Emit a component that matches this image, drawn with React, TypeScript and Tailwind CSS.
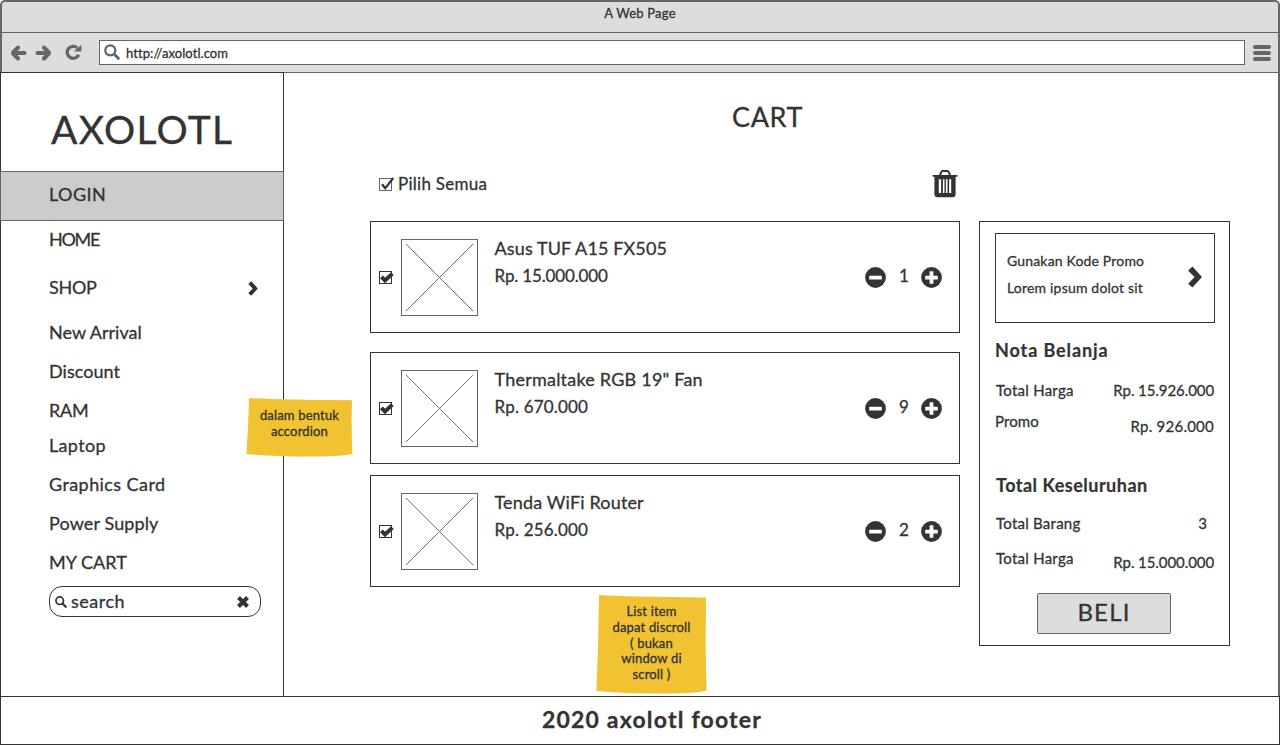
import type { ReactNode } from "react";

const menu = [
  { label: "HOME", style: "h-[38px] tracking-[-1.29px]" },
  { label: "SHOP", style: "h-[58px] tracking-[-0.31px]", expandable: true },
  { label: "New Arrival", style: "h-[32px] tracking-[0.03px]" },
  { label: "Discount", style: "h-[46px] tracking-[0.04px]" },
  { label: "RAM", style: "h-[32px] tracking-[-0.23px]" },
  { label: "Laptop", style: "h-[38px] tracking-[0.34px]" },
  { label: "Graphics Card", style: "h-[40px] tracking-[0.42px]" },
  { label: "Power Supply", style: "h-[38px] tracking-[0.12px]" },
  { label: "MY CART", style: "h-[40px] tracking-[0.05px]" },
];

const items = [
  { name: "Asus TUF A15 FX505", price: "Rp. 15.000.000", qty: 1, nameStyle: "tracking-[0.12px]", priceStyle: "tracking-[-0.15px]", gap: "" },
  { name: 'Thermaltake RGB 19" Fan', price: "Rp. 670.000", qty: 9, nameStyle: "tracking-[0.22px]", priceStyle: "tracking-[0.18px]", gap: "mt-[19px]" },
  { name: "Tenda WiFi Router", price: "Rp. 256.000", qty: 2, nameStyle: "tracking-[0.16px]", priceStyle: "tracking-[0.18px]", gap: "mt-[11px]" },
];

function Chevron({ className }: { className: string }) {
  return (
    <svg viewBox="0 0 14 22" className={className} fill="#333">
      <path d="M.6 4.2 3.9.9Q4.4.4 4.9.9L13.5 10.4Q14 11 13.5 11.6L4.9 21.1Q4.4 21.6 3.9 21.1L.6 18.2Q.1 17.7.6 17.2L6.6 11 .6 5.2Q.1 4.7.6 4.2Z" />
    </svg>
  );
}

function Magnifier({ className }: { className: string }) {
  return (
    <svg viewBox="0 0 16 16" className={className} fill="none" stroke="currentColor" strokeLinecap="round">
      <circle cx="6.3" cy="6.3" r="5" strokeWidth="2.3" />
      <path d="m10.3 10.3 4 4" strokeWidth="3" />
    </svg>
  );
}

function BoldCheck() {
  return (
    <svg viewBox="0 0 16 15" className="h-[15px] w-4 shrink-0">
      <rect x=".5" y="1.5" width="12" height="12" fill="#fff" stroke="#333" />
      <path d="M2.4 6.8 6 10.4 13.4 3.6" fill="none" stroke="#333" strokeWidth="4" />
    </svg>
  );
}

function Placeholder() {
  return (
    <svg viewBox="0 0 77 77" className="size-[77px] shrink-0" fill="none" stroke="#666">
      <rect x=".5" y=".5" width="76" height="76" />
      <path d="m5 5 67 67M72 5 5 72" strokeWidth=".9" />
    </svg>
  );
}

function RoundButton({ plus = false }: { plus?: boolean }) {
  return (
    <button className="size-[21px]">
      <svg viewBox="0 0 21 21" className="size-[21px]">
        <circle cx="10.5" cy="10.5" r="10.4" fill="#333" />
        <rect x="4.2" y="8.7" width="12.6" height="3.8" rx=".6" fill="#fff" />
        {plus && <rect x="8.6" y="4.2" width="3.8" height="12.6" rx=".6" fill="#fff" />}
      </svg>
    </button>
  );
}

function Note({ className, path, viewBox, children }: { className: string; path: string; viewBox: string; children: ReactNode }) {
  return (
    <div className={className}>
      <svg viewBox={viewBox} className="absolute inset-0 size-full">
        <path d={path} fill="#f1c232" />
      </svg>
      <div className="relative text-center text-[13px] leading-[15.75px] tracking-[0.17px]">{children}</div>
    </div>
  );
}

export default function App() {
  return (
    <div className="relative flex h-[745px] w-[1280px] flex-col overflow-hidden bg-white font-['Lato',sans-serif] text-[#333] [-webkit-text-stroke:0.3px_#333]">
      <header className="h-[73px] shrink-0 rounded-t-[5px] border-x-2 border-t-2 border-b border-[#666] bg-[#ddd]">
        <div className="flex h-[31px] items-start justify-center border-b border-[#666] pt-[3px] text-[13px] leading-4 tracking-[0.22px]">
          A Web Page
        </div>
        <div className="flex h-[39px] items-center text-[#666]">
          <svg viewBox="0 0 17 16" className="ml-2 h-4 w-[17px]" fill="none" stroke="currentColor" strokeWidth="4" strokeLinecap="round">
            <path d="M3.5 8H14.5" />
            <path d="M8 2.5 2.6 8 8 13.5" strokeLinejoin="bevel" />
          </svg>
          <svg viewBox="0 0 17 16" className="ml-2 h-4 w-[17px]" fill="none" stroke="currentColor" strokeWidth="4" strokeLinecap="round">
            <path d="M2.5 8H13.5" />
            <path d="M9 2.5 14.4 8 9 13.5" strokeLinejoin="bevel" />
          </svg>
          <svg viewBox="0 0 17 16" className="mb-px ml-[13px] h-4 w-[17px]">
            <path d="M12.2 3.8A6 6 0 1 0 13.7 10.8" fill="none" stroke="currentColor" strokeWidth="3.3" />
            <path d="M16.4.8V6.8Q16.4 7.4 15.8 7.4H8.8Z" fill="currentColor" />
          </svg>
          <div className="ml-[17px] flex h-[25px] w-[1146px] items-center border border-[#666] bg-white">
            <Magnifier className="mb-px ml-1 size-4" />
            <span className="ml-[6px] text-[13px] leading-4 tracking-[0.08px] text-[#333]">http://axolotl.com</span>
          </div>
          <div className="ml-2 flex w-[18px] flex-col gap-[2px]">
            <span className="h-1 rounded-full bg-[#666]" />
            <span className="h-1 rounded-full bg-[#666]" />
            <span className="h-1 rounded-full bg-[#666]" />
          </div>
        </div>
      </header>

      <div className="flex h-[623px] shrink-0">
        <aside className="relative -mt-px flex h-[624px] w-[284px] shrink-0 flex-col border-x border-t border-[#333] bg-white text-[18px]">
          <h1 className="mt-[32px] ml-[50px] h-12 text-[39px] leading-[48px] tracking-[1.25px]">AXOLOTL</h1>
          <div className="-mx-px mt-[18px] flex h-[50px] shrink-0 items-center border border-[#666] bg-[#ccc] pb-[3px] pl-12 tracking-[0.45px]">
            LOGIN
          </div>
          <nav>
            {menu.map((m) => (
              <div key={m.label} className={`flex items-center justify-between pr-[25px] pb-[2px] pl-12 ${m.style}`}>
                {m.label}
                {m.expandable && <Chevron className="mt-[2px] h-[15px] w-[10px]" />}
              </div>
            ))}
          </nav>
          <div className="mt-[3px] ml-12 flex h-[31px] w-[212px] items-center rounded-[13px] border border-[#333] pr-[11px] pl-[5px] text-[18px] leading-5 tracking-[0.5px]">
            <Magnifier className="size-3" />
            <span className="mb-[2px] ml-1">search</span>
            <svg viewBox="0 0 12 12" className="ml-auto size-3" stroke="#333" strokeWidth="4">
              <path d="m1.5 1.5 9 9M10.5 1.5l-9 9" />
            </svg>
          </div>
        </aside>

        <main className="flex-1 border-r-2 border-[#666]">
          <h2 className="mt-[28px] ml-[448px] h-8 text-[27px] leading-8 tracking-[0.6px]">CART</h2>
          <div className="mt-[15px] flex pl-[86px]">
            <section className="w-[590px]">
              <div className="flex h-[73px] items-start">
                <label className="mt-[26px] ml-[9px] flex h-5 items-center text-[17px] leading-5 tracking-[0.28px]">
                  <svg viewBox="0 0 16 15" className="h-[15px] w-4" fill="none">
                    <rect x=".5" y="1.5" width="12" height="12" stroke="#666" />
                    <path d="M3 7.2 6.2 11.3 14.2 1" stroke="#333" strokeWidth="2.2" />
                  </svg>
                  <span className="ml-[3px]">Pilih Semua</span>
                </label>
                <svg viewBox="0 0 26 28" className="mt-[22px] mr-[2px] ml-auto h-7 w-[26px]">
                  <path d="M8 5.5 9.2 2Q9.5 1 10.6 1H15.4Q16.5 1 16.8 2L18 5.5" fill="none" stroke="#333" strokeWidth="2" />
                  <path d="M1 5H25Q25.6 5 25.6 5.8T25 6.8H23.6V24.3Q23.6 27.3 20.6 27.3H5.4Q2.4 27.3 2.4 24.3V6.8H1Q.4 6.6.4 5.8T1 5Z" fill="#333" />
                  <path d="M6.8 9.3H9.1V23H6.8ZM10.9 9.3H12.5V23H10.9ZM13.9 9.3H15.5V23H13.9ZM17.1 9.3H19.2V23H17.1Z" fill="#fff" />
                </svg>
              </div>
              {items.map((it) => (
                <article key={it.name} className={`flex h-[112px] items-center border border-[#333] pl-2 ${it.gap}`}>
                  <BoldCheck />
                  <div className="ml-[6px] flex">
                    <Placeholder />
                    <div className="mt-[-3px] ml-[16.5px]">
                      <div className={`h-6 text-[18px] leading-6 ${it.nameStyle}`}>{it.name}</div>
                      <div className={`mt-[4px] h-6 text-[17px] leading-6 ${it.priceStyle}`}>{it.price}</div>
                    </div>
                  </div>
                  <div className="mr-[17px] ml-auto flex items-center">
                    <RoundButton />
                    <span className="-mt-[2px] w-[35px] pl-px text-center text-[17px] leading-6">{it.qty}</span>
                    <RoundButton plus />
                  </div>
                </article>
              ))}
            </section>

            <section className="mt-[73px] ml-[19px] flex h-[425px] w-[251px] flex-col border border-[#333] pt-[11px] pl-[15px] text-[15px] leading-5">
              <div className="flex h-[90px] w-[220px] items-start justify-between border border-[#333] pr-3 pl-[11px] text-[14px]">
                <div className="mt-[17px]">
                  <div className="tracking-[0.17px]">Gunakan Kode Promo</div>
                  <div className="mt-[7px] tracking-[0.19px]">Lorem ipsum dolot sit</div>
                </div>
                <Chevron className="mt-8 h-[22px] w-[14px]" />
              </div>
              <h3 className="mt-[17px] text-[18px] font-bold tracking-[0.9px] [-webkit-text-stroke:0.2px_#333]">Nota Belanja</h3>
              <div className="mt-5 flex w-[219px] justify-between">
                <span className="pl-px tracking-[0.26px]">Total Harga</span>
                <span className="tracking-[-0.08px]">Rp. 15.926.000</span>
              </div>
              <div className="mt-[11px] flex w-[219px] justify-between">
                <span className="tracking-[0.1px]">Promo</span>
                <span className="mt-[5px] tracking-[0.24px]">Rp. 926.000</span>
              </div>
              <h3 className="mt-[39px] pl-px text-[18px] font-bold tracking-[0.5px] [-webkit-text-stroke:0.2px_#333]">Total Keseluruhan</h3>
              <div className="mt-[18px] flex w-[219px] justify-between">
                <span className="pl-px tracking-[0.24px]">Total Barang</span>
                <span className="pr-[7px]">3</span>
              </div>
              <div className="mt-[15px] flex w-[219px] justify-between">
                <span className="pl-px tracking-[0.26px]">Total Harga</span>
                <span className="mt-1 tracking-[-0.08px]">Rp. 15.000.000</span>
              </div>
              <button className="mt-[21px] ml-[42px] h-[41px] w-[134px] shrink-0 rounded-[2px] border border-[#666] bg-[#ddd] pb-[3px] text-[24px] leading-[36px] tracking-[1.2px]">
                BELI
              </button>
            </section>
          </div>
        </main>
      </div>

      <footer className="flex h-[49px] shrink-0 justify-center border border-[#333] pt-2 pl-[24px] text-[23px] leading-7 font-bold tracking-[1.2px] [-webkit-text-stroke:0.3px_#333]">
        2020 axolotl footer
      </footer>

      <Note
        className="absolute top-[398px] left-[246px] h-[60px] w-[107px] pt-[10px]"
        viewBox="0 0 107 60"
        path="M3 0Q30 1.8 106 2.3Q105 30 106.5 55.5Q100 58.5 66 58.5Q25 58.5.4 56Q2.5 25 3 0Z"
      >
        dalam bentuk
        <br />
        accordion
      </Note>
      <Note
        className="absolute top-[595px] left-[596px] h-[100px] w-[111px] pt-[9px]"
        viewBox="0 0 111 100"
        path="M3 0Q32 1.8 110 2.5Q109 50 110.5 95.5Q102 98.5 68 98.5Q25 98.5.4 96Q2.5 45 3 0Z"
      >
        List item
        <br />
        dapat discroll
        <br />( bukan
        <br />
        window di
        <br />
        scroll )
      </Note>
    </div>
  );
}
